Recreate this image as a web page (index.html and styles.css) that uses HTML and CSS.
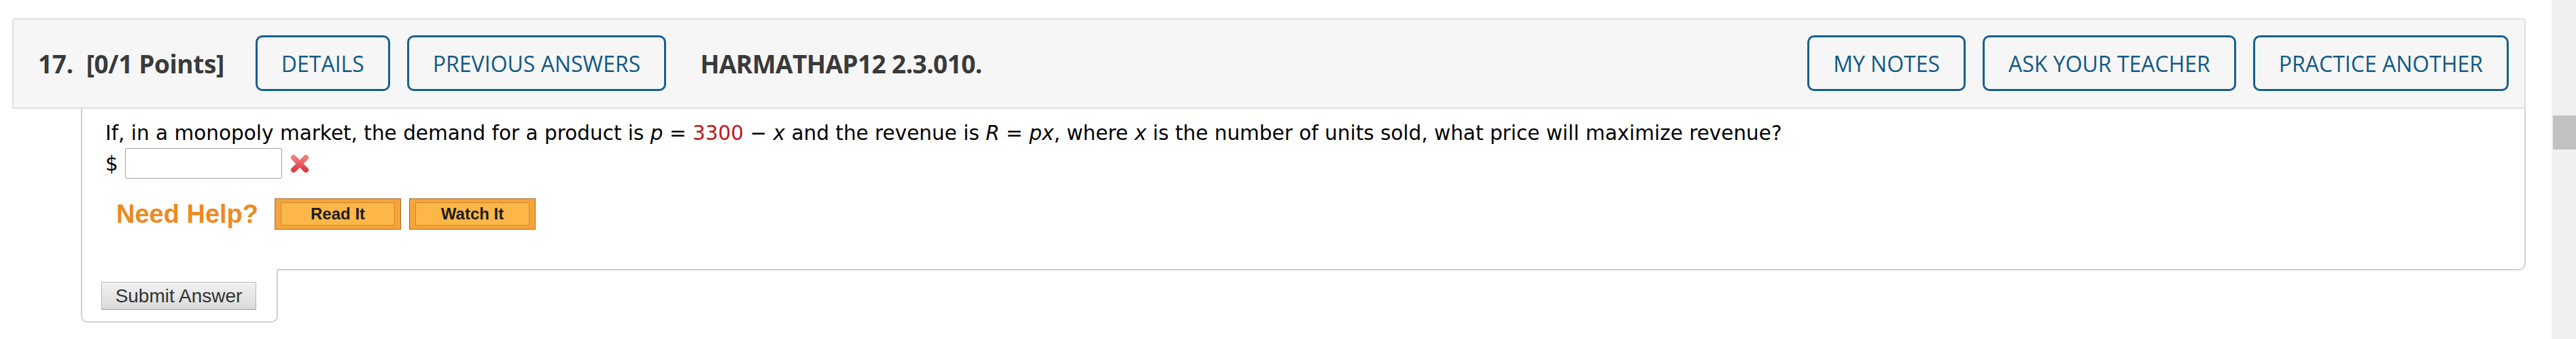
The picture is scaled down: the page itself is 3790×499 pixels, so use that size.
FILE: index.html
```html
<!DOCTYPE html>
<html lang="en">
<head>
<meta charset="utf-8">
<title>Question 17</title>
<link rel="stylesheet" href="styles.css">
</head>
<body>
<div class="page">
  <main class="main">
    <div class="qhead">
      <div class="qtitle"><span class="qnum">17.</span><span class="qpts">[0/1 Points]</span></div>
      <button class="hbtn">DETAILS</button>
      <button class="hbtn">PREVIOUS ANSWERS</button>
      <div class="qcode">HARMATHAP12 2.3.010.</div>
      <div class="hright">
        <button class="hbtn">MY NOTES</button>
        <button class="hbtn">ASK YOUR TEACHER</button>
        <button class="hbtn">PRACTICE ANOTHER</button>
      </div>
    </div>
    <div class="qbody">
      <p class="qtext">If, in a monopoly market, the demand for a product is <i>p</i> = <span class="num">3300</span> − <i>x</i> and the revenue is <i>R</i> = <i>px</i>, where <i>x</i> is the number of units sold, what price will maximize revenue?</p>
      <div class="answer">
        <span class="dollar">$</span>
        <input class="ans-input" type="text" aria-label="answer">
        <svg class="wrong" width="30" height="30" viewBox="0 0 30 30" aria-hidden="true">
          <defs>
            <linearGradient id="xg" x1="0" y1="0" x2="0" y2="1">
              <stop offset="0" stop-color="#f47a7c"/>
              <stop offset="1" stop-color="#dc3b42"/>
            </linearGradient>
          </defs>
          <path d="M6 6 L24 24 M24 6 L6 24" stroke="url(#xg)" stroke-width="8" stroke-linecap="round"/>
        </svg>
      </div>
      <div class="help">
        <span class="help-label">Need Help?</span>
        <button class="help-btn"><span class="help-inner">Read It</span></button>
        <button class="help-btn"><span class="help-inner">Watch It</span></button>
      </div>
    </div>
    <div class="submit-tab">
      <button class="submit-btn">Submit Answer</button>
    </div>
  </main>
  <div class="scrollbar"><div class="thumb"></div></div>
</div>
</body>
</html>
```
FILE: styles.css
```css
* { box-sizing: border-box; }

html, body {
  margin: 0;
  padding: 0;
  height: 499px;
  overflow: hidden;
  background: #fff;
}

.page {
  display: flex;
  width: 3790px;
  height: 499px;
}

.main {
  flex: 1;
  padding: 27px 38px 0 18px;
}

/* header */
.qhead {
  display: flex;
  align-items: center;
  gap: 25px;
  background: #f6f6f6;
  border: 2px solid #dedede;
  border-radius: 4px 4px 0 0;
  padding: 23px 23px 24px 36px;
  font-family: "Open Sans", sans-serif;
}

.qtitle {
  display: flex;
  font-size: 37px;
  font-weight: 700;
  letter-spacing: -0.4px;
  color: #3a3a3a;
  margin-right: 21px;
  line-height: 1;
}

.qnum { margin-right: 19px; }

.hbtn {
  height: 82px;
  padding: 0 35px;
  border: 3px solid #15608d;
  border-radius: 10px;
  background: transparent;
  color: #125a86;
  font-family: "Open Sans", sans-serif;
  font-size: 32px;
  font-weight: 400;
  white-space: nowrap;
}

.qcode {
  margin-left: 25px;
  font-size: 37px;
  font-weight: 700;
  letter-spacing: -0.6px;
  color: #3a3a3a;
}

.hright {
  margin-left: auto;
  display: flex;
  gap: 25px;
}

/* question body */
.qbody {
  margin-left: 101px;
  border: 2px solid #d0d0d0;
  border-top: none;
  border-radius: 0 0 10px 0;
  padding: 18px 0 58px 34px;
  font-family: "DejaVu Sans", Verdana, sans-serif;
  font-size: 29.5px;
  color: #000;
}

.qtext {
  margin: 0;
  line-height: 36px;
}

.qtext i { font-style: italic; }

.num { color: #bf1a1f; }

.answer {
  display: flex;
  align-items: center;
  margin-top: 4px;
}

.dollar {
  line-height: 36px;
}

.ans-input {
  width: 231px;
  height: 45px;
  margin-left: 10px;
  border: 1px solid #a3a3a3;
  border-radius: 2px;
  background: #fff;
}

.wrong {
  margin-left: 11px;
}

.help {
  display: flex;
  align-items: center;
  margin-top: 29px;
  padding-left: 16px;
}

.help-label {
  font-family: "Liberation Sans", Arial, sans-serif;
  font-weight: 700;
  font-size: 38px;
  color: #ec8a22;
  margin-right: 24px;
}

.help-btn {
  width: 186px;
  height: 46px;
  padding: 5px 8px;
  margin-right: 12px;
  border: 1px solid #a8692a;
  background: #f5a43b;
  display: flex;
}

.help-inner {
  flex: 1;
  display: flex;
  align-items: center;
  justify-content: center;
  border: 1px solid #cf8733;
  background: #fcb748;
  font-family: "Liberation Sans", Arial, sans-serif;
  font-weight: 700;
  font-size: 24px;
  color: #1c1c1c;
}

/* submit tab */
.submit-tab {
  position: relative;
  margin-left: 101px;
  margin-top: -2px;
  width: 290px;
  background: #fff;
  border: 2px solid #d0d0d0;
  border-top: none;
  border-radius: 0 0 10px 10px;
  padding: 19px 0 17px 28px;
}

.submit-btn {
  width: 228px;
  height: 41px;
  padding: 0;
  border: 1px solid #b8b8b8;
  border-bottom-color: #9d9d9d;
  background: linear-gradient(#f2f2f2, #dadada);
  font-family: "Liberation Sans", Arial, sans-serif;
  font-size: 28px;
  color: #333;
}

/* scrollbar */
.scrollbar {
  width: 36px;
  height: 499px;
  background: #f0f0f0;
  padding: 170px 0 0 2px;
}

.thumb {
  height: 50px;
  background: #c1c1c1;
}
```
